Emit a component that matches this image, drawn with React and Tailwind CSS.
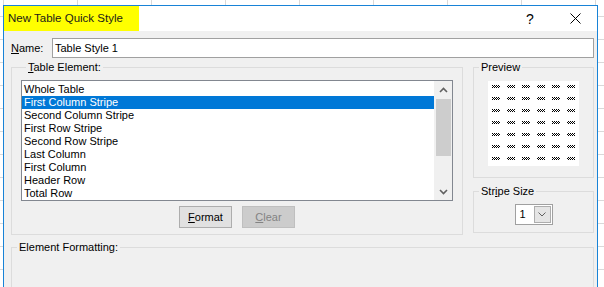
import { useState } from 'react';

const items = [
  'Whole Table',
  'First Column Stripe',
  'Second Column Stripe',
  'First Row Stripe',
  'Second Row Stripe',
  'Last Column',
  'First Column',
  'Header Row',
  'Total Row',
];

function GroupBox({ label, className = '', children }) {
  return (
    <fieldset className={`border border-[#dcdcdc] ${className}`}>
      <legend className="ml-[5px] px-[2px] leading-[14px]">{label}</legend>
      {children}
    </fieldset>
  );
}

function Chevron({ up }) {
  return (
    <svg width="9" height="6" viewBox="0 0 9 6" className="block">
      <path
        d={up ? 'M1 5 L4.5 1.5 L8 5' : 'M1 1 L4.5 4.5 L8 1'}
        fill="none"
        stroke="#606060"
        strokeWidth="1.6"
      />
    </svg>
  );
}

function PreviewGrid() {
  const cols = [0, 1, 2, 3, 4, 5];
  const rows = [0, 1, 2, 3, 4, 5, 6];
  return (
    <svg width="91" height="85" viewBox="0 0 91 85" className="block bg-white">
      <defs>
        <pattern id="hatch" width="2" height="2" patternUnits="userSpaceOnUse">
          <rect x="0" y="0" width="1" height="1" fill="#000" />
          <rect x="1" y="1" width="1" height="1" fill="#000" />
        </pattern>
      </defs>
      {rows.map((r) =>
        cols.map((c) => (
          <rect key={`${r}-${c}`} x={4 + c * 15} y={4 + r * 12} width="8" height="3" fill="url(#hatch)" />
        ))
      )}
    </svg>
  );
}

export default function App() {
  const [selected, setSelected] = useState(1);

  return (
    <div
      className="w-[604px] h-[287px] overflow-hidden bg-white pt-[5px] pl-[3px] bg-[linear-gradient(to_right,#d9d9d9_1px,transparent_1px),linear-gradient(to_bottom,#d9d9d9_1px,transparent_1px)] bg-[size:74px_23px] bg-[position:3px_16px]"
      style={{ fontFamily: '"Liberation Sans", Arial, sans-serif' }}
    >
      <div className="w-[595px] h-[300px] border border-[#1883d7] bg-[#f0f0f0] text-[11px] text-black flex flex-col">
        {/* title bar */}
        <div className="h-[25px] bg-white flex items-center">
          <div className="h-full w-[135px] bg-[#ffff00] flex items-center pl-[4px] text-[11.5px] text-[#1a1a1a]">
            New Table Quick Style
          </div>
          <div className="flex-1" />
          <div className="w-[20px] text-center text-[14px] leading-none">?</div>
          <div className="w-[30px]" />
          <svg width="11" height="11" viewBox="0 0 11 11" className="block">
            <path d="M0.5 0.5 L10.5 10.5 M10.5 0.5 L0.5 10.5" stroke="#000" strokeWidth="1" />
          </svg>
          <div className="w-[16px]" />
        </div>

        {/* body */}
        <div className="flex-1 pl-[7px] pr-[3px] pt-[7px]">
          <div className="flex items-center">
            <span className="w-[41px]">
              <span className="underline">N</span>ame:
            </span>
            <div className="flex-1 h-[20px] border border-[#a0a0a0] bg-white flex items-center pl-[2px]">
              Table Style 1
            </div>
          </div>

          <div className="flex gap-[10px] mt-[2px] items-start">
            <GroupBox
              className="w-[452px] pl-[9px] pr-[9px] pb-[6px]"
              label={
                <>
                  <span className="underline">T</span>able Element:
                </>
              }
            >
              <div className="mt-[6px] h-[121px] border border-[#828790] bg-white flex">
                <div className="flex-1 pt-[2px]">
                  {items.map((item, i) => (
                    <div
                      key={item}
                      onClick={() => setSelected(i)}
                      className={`h-[13px] leading-[13px] pl-[2px] ${
                        i === selected ? 'bg-[#0078d7] text-white' : ''
                      }`}
                    >
                      {item}
                    </div>
                  ))}
                </div>
                <div className="w-[18px] bg-[#f0f0f0] flex flex-col items-center">
                  <div className="h-[18px] flex items-center justify-center">
                    <Chevron up />
                  </div>
                  <div className="w-[15px] h-[57px] bg-[#cdcdcd]" />
                  <div className="flex-1" />
                  <div className="h-[17px] flex items-center justify-center">
                    <Chevron />
                  </div>
                </div>
              </div>
              <div className="flex justify-center gap-[10px] mt-[5px]">
                <button className="w-[53px] h-[22px] bg-[#e1e1e1] border border-[#adadad] text-[11px]">
                  <span className="underline">F</span>ormat
                </button>
                <button className="w-[53px] h-[22px] bg-[#cccccc] border border-[#bfbfbf] text-[11px] text-[#838383]">
                  <span className="underline">C</span>lear
                </button>
              </div>
            </GroupBox>

            <div className="flex flex-col gap-[6px]">
              <GroupBox className="w-[121px] pb-[11px] flex flex-col" label="Preview">
                <div className="mt-[7px] flex justify-center">
                  <PreviewGrid />
                </div>
              </GroupBox>
              <GroupBox
                className="w-[121px] pb-[7px]"
                label={
                  <>
                    Str<span className="underline">i</span>pe Size
                  </>
                }
              >
                <div className="mt-[6px] flex justify-center">
                  <div className="w-[38px] h-[21px] border border-[#a0a0a0] bg-white flex items-center">
                    <span className="pl-[4px] flex-1">1</span>
                    <div className="w-[17px] h-[17px] mr-[1px] bg-[#e5e5e5] border border-[#adadad] flex items-center justify-center">
                      <svg width="8" height="5" viewBox="0 0 8 5" className="block">
                        <path d="M0.5 0.5 L4 4 L7.5 0.5" fill="none" stroke="#606060" strokeWidth="1" />
                      </svg>
                    </div>
                  </div>
                </div>
              </GroupBox>
            </div>
          </div>

          <GroupBox className="mt-[5px] h-[60px]" label="Element Formatting:" />
        </div>
      </div>
    </div>
  );
}
